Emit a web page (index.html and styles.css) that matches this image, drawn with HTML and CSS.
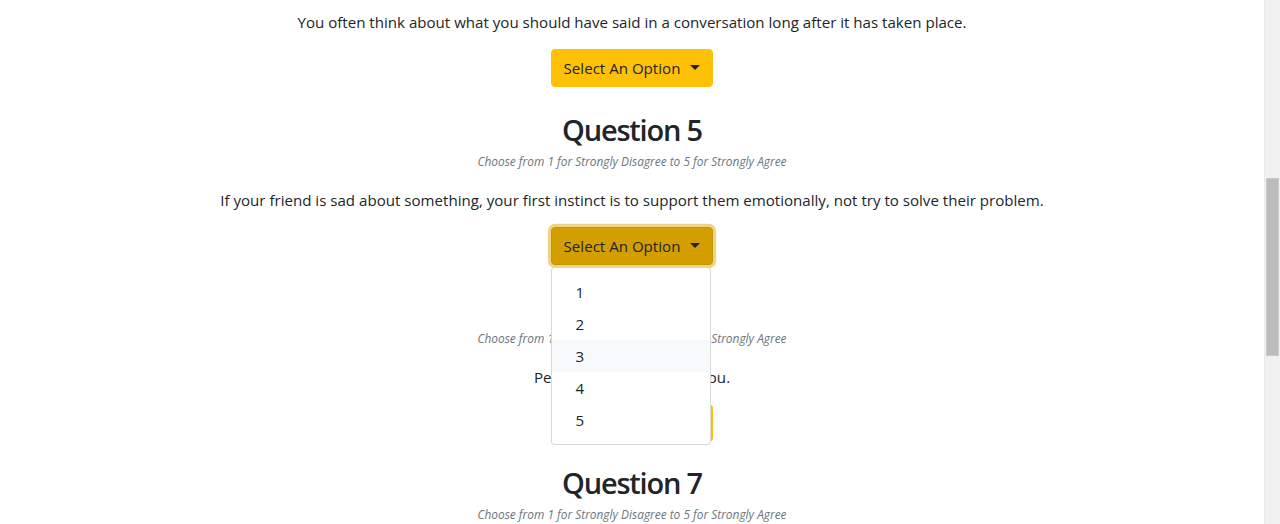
FILE: index.html
```html
<!DOCTYPE html>
<html lang="en">
<head>
<meta charset="utf-8">
<title>Quiz</title>
<link rel="stylesheet" href="styles.css">
</head>
<body>
<div class="viewport">
  <main class="quiz">
    <p class="q-text">You often think about what you should have said in a conversation long after it has taken place.</p>
    <div class="dropdown">
      <button class="btn-select" type="button">Select An Option</button>
    </div>

    <section class="question">
      <h2 class="q-title">Question 5</h2>
      <p class="q-hint"><small>Choose from 1 for Strongly Disagree to 5 for Strongly Agree</small></p>
      <p class="q-text">If your friend is sad about something, your first instinct is to support them emotionally, not try to solve their problem.</p>
      <div class="dropdown is-open">
        <button class="btn-select is-active" type="button">Select An Option</button>
        <ul class="dropdown-menu">
          <li class="dropdown-item">1</li>
          <li class="dropdown-item">2</li>
          <li class="dropdown-item is-hover">3</li>
          <li class="dropdown-item">4</li>
          <li class="dropdown-item">5</li>
        </ul>
      </div>
    </section>

    <section class="question">
      <h2 class="q-title">Question 6</h2>
      <p class="q-hint"><small>Choose from 1 for Strongly Disagree to 5 for Strongly Agree</small></p>
      <p class="q-text">People often confide in you.</p>
      <div class="dropdown">
        <button class="btn-select" type="button">Select An Option</button>
      </div>
    </section>

    <section class="question">
      <h2 class="q-title">Question 7</h2>
      <p class="q-hint"><small>Choose from 1 for Strongly Disagree to 5 for Strongly Agree</small></p>
      <p class="q-text">You enjoy meeting new people and making new friends.</p>
      <div class="dropdown">
        <button class="btn-select" type="button">Select An Option</button>
      </div>
    </section>
  </main>
  <div class="scrollbar"><div class="scrollbar-thumb"></div></div>
</div>
</body>
</html>
```

FILE: styles.css
```css
html, body {
  margin: 0;
  padding: 0;
  height: 524px;
  overflow: hidden;
  background: #fff;
}

body {
  font-family: "Open Sans", "Noto Sans", sans-serif;
  font-size: 15.1px;
  line-height: 24px;
  color: #212529;
}

.viewport {
  display: flex;
  height: 524px;
}

.quiz {
  flex: 1;
  text-align: center;
  padding-top: 10px;
}

.q-text {
  margin: 0 0 15px;
}

.q-title {
  font-size: 29px;
  font-weight: 600;
  letter-spacing: -1.2px;
  line-height: 38.4px;
  margin: 0;
}

.q-hint {
  margin: -1px 0 15px;
  line-height: 24px;
}

.q-hint small {
  font-size: 11.9px;
  font-style: italic;
  color: #6c757d;
}

.question {
  margin-top: 24px;
}

.question + .question {
  margin-top: 22px;
}

.dropdown {
  position: relative;
  display: inline-block;
  vertical-align: top;
}

.btn-select {
  font-family: inherit;
  font-size: 15.1px;
  line-height: 24px;
  color: #212529;
  background: #ffc107;
  border: 1px solid #ffc107;
  border-radius: 4px;
  padding: 6px 12px;
  cursor: pointer;
  display: inline-block;
  vertical-align: top;
}

.btn-select::after {
  content: "";
  display: inline-block;
  margin-left: 10px;
  vertical-align: 4px;
  border-top: 5px solid;
  border-right: 5px solid transparent;
  border-left: 5px solid transparent;
  border-bottom: 0;
}

.btn-select.is-active {
  background: #d39e00;
  border-color: #c69500;
  box-shadow: 0 0 0 3.2px rgba(222, 170, 12, 0.5);
  outline: none;
}

.dropdown-menu {
  position: absolute;
  top: 100%;
  left: 0;
  z-index: 10;
  min-width: 160px;
  margin: 2px 0 0;
  padding: 8px 0;
  list-style: none;
  text-align: left;
  background: #fff;
  border: 1px solid rgba(0, 0, 0, 0.15);
  border-radius: 4px;
  box-sizing: border-box;
  font-size: 15.1px;
}

.dropdown-item {
  padding: 4px 24px;
  line-height: 24px;
  color: #212529;
  white-space: nowrap;
}

.dropdown-item.is-hover {
  background: #f8f9fa;
}

.scrollbar {
  width: 16px;
  flex: none;
  background: #f1f1f1;
  border-left: 1px solid #e9e9e9;
  box-sizing: border-box;
  padding: 178px 1px 0 1px;
}

.scrollbar-thumb {
  height: 178px;
  background: #bcbcbc;
  border: 1px solid #c8c8c8;
  box-sizing: border-box;
}
```
